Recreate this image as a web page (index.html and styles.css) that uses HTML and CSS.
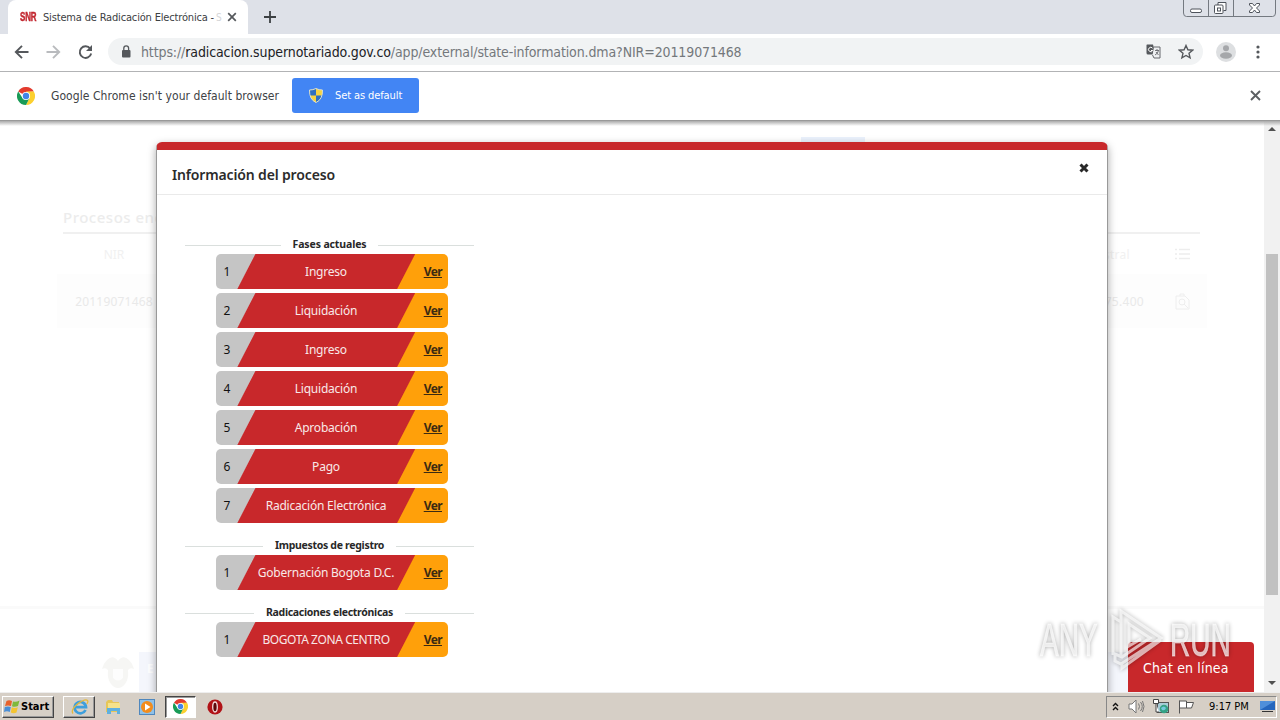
FILE: index.html
```
<!DOCTYPE html>
<html lang="es">
<head>
<meta charset="utf-8">
<title>Sistema de Radicación Electrónica</title>
<link rel="stylesheet" href="styles.css">
</head>
<body>
<svg class="defs" width="0" height="0">
  <symbol id="chrome" viewBox="0 0 18 18">
    <path d="M9 9L1.2 4.5A9 9 0 0 1 16.8 4.5L9 5z" fill="#e33b2e"/>
    <path d="M16.8 4.5A9 9 0 0 1 9 18L12.5 11 9 4.5z" fill="#fcd02f"/>
    <path d="M1.2 4.5A9 9 0 0 0 9 18L12.5 11 9 9 5.5 11z" fill="#199b57"/>
    <circle cx="9" cy="9" r="4.1" fill="#fff"/><circle cx="9" cy="9" r="3.2" fill="#4285e8"/>
  </symbol>
</svg>
<div class="screen">
  <header class="tabstrip">
    <div class="tab">
      <span class="favicon">SNR</span>
      <span class="tab-title">Sistema de Radicación Electrónica - <i>S</i></span>
      <svg class="tab-close" width="10" height="10" viewBox="0 0 10 10"><path d="M1.2 1.2l7.6 7.6M8.8 1.2L1.2 8.8" stroke="#55585c" stroke-width="1.7"/></svg>
    </div>
    <svg class="newtab" width="12" height="12" viewBox="0 0 12 12"><path d="M6 0v12M0 6h12" stroke="#3c4043" stroke-width="1.8"/></svg>
    <svg class="winctl" width="94" height="18" viewBox="0 0 94 18" fill="none" stroke="#747980">
      <path d="M.5 0v13q0 3.5 3 3.5h86q3 0 3-3.5V0M25.5 0v16M50.5 0v16"/>
      <g stroke="#4e535b"><rect x="7.500" y="9" width="11" height="3.500" rx="1.500" fill="#fff"/>
      <path d="M35 5V2.500h8v8h-2.500" fill="#fff"/><rect x="31.500" y="5" width="8.500" height="8.500" rx="1" fill="#fff"/><rect x="34.500" y="8" width="3" height="3"/>
      <path d="M66.500 3.500h3l2 2.500 2-2.500h3v1.500l-3 3 3 3v1.500h-3l-2-2.500-2 2.500h-3V11l3-3-3-3z" fill="#fff"/></g>
    </svg>
  </header>
  <nav class="toolbar">
    <svg class="nav-icons" width="80" height="16" viewBox="0 0 80 16" fill="none" stroke="#55585c" stroke-width="1.9">
      <path d="M14.500 8H2M8 1.800L1.800 8 8 14.200"/>
      <path d="M32.500 8H45M39 1.800L45.200 8 39 14.200" stroke="#b9bbbe"/>
      <path d="M76.200 4.600A5.800 5.800 0 1 0 77.200 9.500"/><path d="M78 1v6h-6z" fill="#55585c" stroke="none"/>
    </svg>
    <div class="omnibox">
      <svg width="10" height="13" viewBox="0 0 10 13"><rect x="1" y="5" width="8.500" height="7.500" rx="1" fill="#55585c"/><path d="M2.800 5V3.300a2.400 2.400 0 0 1 4.800 0V5" fill="none" stroke="#55585c" stroke-width="1.300"/></svg>
      <span class="url"><span class="scheme">https://</span><span class="host">radicacion.supernotariado.gov.co</span><span class="path">/app/external/state-information.dma?NIR=20119071468</span></span>
      <svg class="translate" width="15" height="15" viewBox="0 0 15 15"><path d="M1 .5h6l3 10H2q-1.500 0-1.500-1.500V1z" fill="#55585c"/><path d="M8 3h6v11H8L6.500 11" fill="#eef0f2" stroke="#66696d"/><path d="M6.500 4.200a2.200 2.200 0 1 0 .2 2.300H5" fill="none" stroke="#fff"/><path d="M9 6.500h4M11 5v1.500M12.500 6.500Q12 9.500 9 11M10 8l2.500 3" fill="none" stroke="#66696d" stroke-width=".9"/></svg>
      <svg class="star" width="16" height="16" viewBox="0 0 16 16"><path d="M8 1.500l1.900 4.300 4.700.4-3.600 3.100 1.100 4.600L8 11.500l-4.100 2.400L5 9.300 1.400 6.200l4.700-.4z" fill="none" stroke="#55585c" stroke-width="1.400"/></svg>
    </div>
    <svg class="avatar" width="20" height="20" viewBox="0 0 20 20"><circle cx="10" cy="10" r="10" fill="#dddfe1"/><circle cx="10" cy="6.300" r="3" fill="#a5a7aa"/><ellipse cx="10" cy="13.500" rx="6" ry="3.300" fill="#a5a7aa"/></svg>
    <svg class="kebab" width="4" height="14" viewBox="0 0 4 14" fill="#55585c"><circle cx="2" cy="2" r="1.600"/><circle cx="2" cy="7" r="1.600"/><circle cx="2" cy="12" r="1.600"/></svg>
  </nav>
  <div class="infobar">
    <svg width="18" height="18"><use href="#chrome"/></svg>
    <span class="info-text">Google Chrome isn't your default browser</span>
    <button class="default-btn">
      <svg width="14" height="15" viewBox="0 0 14 15"><path d="M7 .5Q10 2 13.500 2q.3 9.500-6.500 12.500Q.2 11.500.5 2 4 2 7 .5z" fill="#f6d341"/><path d="M7 .5V7.500H.9Q.4 5 .5 2 4 2 7 .5zM7 7.500h6.200Q12 12.500 7 14.500z" fill="#2f6fc0"/><path d="M7 .5Q10 2 13.500 2q.3 9.500-6.500 12.500Q.2 11.500.5 2 4 2 7 .5z" fill="none" stroke="#d9dfd0"/></svg>
      <span>Set as default</span>
    </button>
    <svg class="info-close" width="11" height="11" viewBox="0 0 11 11"><path d="M1 1l9 9M10 1l-9 9" stroke="#5c5f63" stroke-width="1.900"/></svg>
  </div>
  <main class="viewport">
    <div class="page">
      <div class="results">
        <h2>Procesos enc</h2>
        <div class="thead"><span class="c-nir">NIR</span><span class="c-val">gistral</span>
          <svg width="15" height="12" viewBox="0 0 15 12" stroke="#ededed" stroke-width="1.300"><path d="M4 1.500h11M4 6h11M4 10.500h11M0 1.500h2M0 6h2M0 10.500h2"/></svg></div>
        <div class="trow"><span class="c-nir">20119071468</span><span class="c-val">75.400</span>
          <svg width="15" height="17" viewBox="0 0 15 17" fill="none" stroke="#eee"><path d="M1 3h9l4 4v9H1zM5 3V1h4v2"/><circle cx="7" cy="9" r="3"/><path d="M9 11l4 4"/></svg></div>
      </div>
      <footer class="site-footer">
        <svg width="42" height="40" viewBox="0 0 42 40" fill="#f6f6f4"><path d="M10 8q6-6 11 1 5-7 11-1 4 4 5 9-4-2-6 1 1 9-3 14-3 4-7 4t-7-4q-4-5-3-14-2-3-6-1 1-5 5-9z"/><path d="M16 17h10v9q-5 5-10 0z" fill="#fdfdfd"/></svg>
        <div class="flagbox">E</div>
      </footer>
    </div>
    <div class="scrollbar">
      <svg width="16" height="17" viewBox="0 0 16 17"><path d="M4 10l4-4 4 4z" fill="#505050"/></svg>
      <div class="thumb"></div>
      <svg width="16" height="17" viewBox="0 0 16 17"><path d="M4 6h8l-4 4z" fill="#505050"/></svg>
    </div>
    <div class="edge-shadow"></div>
    <div class="search-tab"></div>
    <section class="modal">
      <div class="modal-head"><h1>Información del proceso</h1>
        <svg width="10" height="10" viewBox="0 0 10 10"><path d="M1.500 1.500l7 7M8.500 1.500l-7 7" stroke="#282828" stroke-width="3"/></svg></div>
      <div class="modal-body">
        <div class="legend"><span>Fases actuales</span></div>
        <div class="rows">
          <div class="phase"><b>1</b><span>Ingreso</span><a>Ver</a></div>
          <div class="phase"><b>2</b><span>Liquidación</span><a>Ver</a></div>
          <div class="phase"><b>3</b><span>Ingreso</span><a>Ver</a></div>
          <div class="phase"><b>4</b><span>Liquidación</span><a>Ver</a></div>
          <div class="phase"><b>5</b><span>Aprobación</span><a>Ver</a></div>
          <div class="phase"><b>6</b><span>Pago</span><a>Ver</a></div>
          <div class="phase"><b>7</b><span>Radicación Electrónica</span><a>Ver</a></div>
        </div>
        <div class="legend tight"><span>Impuestos de registro</span></div>
        <div class="rows"><div class="phase"><b>1</b><span>Gobernación Bogota D.C.</span><a>Ver</a></div></div>
        <div class="legend tight"><span>Radicaciones electrónicas</span></div>
        <div class="rows"><div class="phase"><b>1</b><span class="caps">BOGOTA ZONA CENTRO</span><a>Ver</a></div></div>
      </div>
    </section>
    <div class="chat">Chat en línea</div>
    <div class="watermark"><span>ANY</span>
      <svg width="58" height="64" viewBox="0 0 58 64" fill="none" stroke="#fff" stroke-opacity=".65" stroke-width="3"><path d="M6 47V9l8 5v34M14 14V3l40 27-40 26-6-3V46l7 3 28-19-21-14v22l12-7M15 56v4l39-28"/></svg>
      <span>RUN</span></div>
  </main>
  <footer class="taskbar">
    <div class="task start">
      <svg width="16" height="15" viewBox="0 0 16 15"><path d="M2.500 2Q5 .5 8 2L7 7Q4 5.800 1 7z" fill="#e8622c"/><path d="M9 2.400Q12 3.500 15.500 1.500L14 7q-3 1.500-6 .3z" fill="#7fb93c"/><path d="M.8 8Q4 6.800 6.800 8l-1 5Q3 11.500 0 13z" fill="#4a8ed6"/><path d="M7.800 8.300q3 1.200 6 0L12.500 13.500q-3 1.500-5.700 0z" fill="#f4c431"/></svg>
      <span>Start</span></div>
    <div class="task ie">
      <svg width="18" height="18" viewBox="0 0 18 18" fill="none"><path d="M14.500 12A5.700 5.700 0 1 1 15 9.200H5" stroke="#3e9fdc" stroke-width="2.700"/><path d="M2 15.500Q-.5 12 6 6.500 14 .5 16.500 2.500q1 1-.7 3.500" stroke="#e5b93c" stroke-width="1.300"/></svg></div>
    <svg class="folder" width="16" height="16" viewBox="0 0 16 16"><path d="M1 3l2-2h4l1 2h6v10H1z" fill="#e6c658"/><path d="M3 4h12v7H3z" fill="#f5e28a"/><path d="M2 9h13v6h-3v-3H6v3H2z" fill="#5fb0df"/></svg>
    <svg class="media" width="16" height="16" viewBox="0 0 16 16"><rect x=".5" y=".5" width="15" height="15" fill="#8fc1e8" stroke="#4f87bd"/><circle cx="8" cy="8" r="6" fill="#f28c1c"/><path d="M6 4.500v7L11.500 8z" fill="#fff"/></svg>
    <div class="task chrome-task"><svg width="15" height="15"><use href="#chrome"/></svg></div>
    <svg class="opera" width="16" height="16" viewBox="0 0 16 16"><circle cx="8" cy="8" r="7.600" fill="#b11217"/><ellipse cx="8" cy="8" rx="2.300" ry="5" fill="#5d070a" stroke="#f2dcdc" stroke-width="1.300"/></svg>
    <div class="tray">
      <svg class="chev" width="7" height="9" viewBox="0 0 7 9" fill="none" stroke="#111" stroke-width="1.400"><path d="M1 4l2.500-2.500L6 4M1 8l2.500-2.500L6 8"/></svg>
      <svg class="vol" width="17" height="15" viewBox="0 0 17 15" fill="none" stroke="#777"><path d="M1 5h3l4-4v13l-4-4H1z" fill="#fff"/><path d="M10.500 4.500q2 3 0 6M12.500 3q3.500 4.500 0 9M14.500 2q3 5.500 0 11"/></svg>
      <svg class="net" width="17" height="15" viewBox="0 0 17 15"><rect x="4.500" y="3.500" width="11" height="10" fill="#a9cdd8" stroke="#555"/><path d="M.5 .5h5v4h-5zM3 4.500V13h3" fill="#fff" stroke="#444"/><circle cx="11" cy="10" r="4.300" fill="#35a184"/><path d="M8 9q3-3 5 0-1 3-4 2z" fill="#75c8dd"/></svg>
      <svg class="flag" width="17" height="15" viewBox="0 0 17 15" fill="#fff" stroke="#555"><path d="M1.500 14.500V1.500M1.500 2h7v7h-7zM8.500 3.500h7l-2 5.500h-5"/></svg>
      <span class="clock">9:17 PM</span>
      <svg class="desk" width="15" height="13" viewBox="0 0 15 13"><path d="M0 1h15v9H0z" fill="#2566bd"/><path d="M0 1h15L5 7 0 10z" fill="#4f8fda"/><path d="M2 11.500h11" stroke="#333"/></svg>
    </div>
  </footer>
</div>
</body>
</html>
```
FILE: styles.css
```
* { box-sizing: border-box; }
body { margin: 0; font-family: "DejaVu Sans Condensed", "DejaVu Sans", sans-serif; }
svg { display: block; flex: none; }
.defs { position: absolute; }
.screen { width: 1280px; height: 720px; overflow: hidden; display: flex; flex-direction: column; background: #fff; white-space: nowrap; }

.tabstrip { height: 34px; background: #dee1e8; display: flex; align-items: center; }
.tab { width: 240px; height: 34px; margin-left: 8px; background: #fff; border-radius: 8px 8px 0 0; display: flex; align-items: center; padding-left: 12px; }
.favicon { width: 23px; font: bold 12px "Liberation Sans", sans-serif; letter-spacing: -.2px; color: #c22730; transform: scaleX(.66); transform-origin: 0 50%; -webkit-text-stroke: .5px #c22730; }
.tab-title { width: 176px; font-size: 11px; letter-spacing: -.17px; color: #3c4043; }
.tab-title i { font-style: normal; font-size: 10px; color: #d5d6d8; margin-left: -1px; }
.tab-close { margin-left: 8px; }
.newtab { margin-left: 16px; }
.winctl { margin: 0 3px 0 auto; align-self: flex-start; }

.toolbar { height: 38px; border-bottom: 1px solid #b2b3b5; display: flex; align-items: center; padding: 0 20px 2px 14px; }
.omnibox { margin-left: 14px; width: 1095px; height: 27px; border-radius: 14px; background: #f1f3f4; display: flex; align-items: center; padding: 0 9px 0 13px; }
.url { margin-left: 10px; font-size: 14px; letter-spacing: -.115px; }
.scheme, .path { color: #74787c; }
.host { color: #202124; }
.translate { margin-left: auto; }
.star { margin-left: 17px; }
.avatar { margin-left: 13px; }
.kebab { margin-left: auto; }

.infobar { height: 48px; display: flex; align-items: center; padding: 0 19px 1px 17px; }
.info-text { width: 229px; margin-left: 16px; font-size: 12px; letter-spacing: .06px; color: #404245; }
.default-btn { margin: 0 0 0 12px; width: 127px; height: 35px; border: 0; border-radius: 3px; background: #4285f4; color: #fff; display: flex; align-items: center; padding: 0 0 0 17px; gap: 12px; font: 11px "DejaVu Sans Condensed", sans-serif; letter-spacing: -.1px; }
.info-close { margin-left: auto; }

.viewport { position: relative; height: 572px; display: flex; overflow: hidden; border-top: 1px solid #999; }
.edge-shadow { position: absolute; left: 0; top: 0; width: 100%; height: 5px; background: linear-gradient(#aaa, rgba(200,200,200,0)); }
.page { flex: 1; padding-top: 82px; display: flex; flex-direction: column; color: #f1f1f1; font-family: "Noto Sans", sans-serif; }
.results { margin: 0 57px 0 57px; }
.results h2 { margin: 0 7px 0 6px; height: 31px; line-height: 28px; font-size: 15px; font-weight: 500; letter-spacing: .5px; width: 1137px; color: #ececec; border-bottom: 2px solid #f0f0f0; }
.thead, .trow { display: flex; align-items: center; font-size: 12px; }
.thead { height: 40px; }
.trow { height: 54px; background: #fdfdfd; color: #e9e9e9; }
.c-nir { width: 102px; margin-left: 6px; text-align: center; }
.trow .c-nir { letter-spacing: .2px; }
.c-val { margin-left: auto; width: 100px; text-align: right; letter-spacing: .3px; }
.thead .c-val { padding-right: 14px; }
.thead svg, .trow svg { margin: 0 17px 0 31px; }
.site-footer { margin-top: auto; height: 86px; border-top: 3px solid #fafafa; display: flex; padding: 43px 0 0 97px; }
.flagbox { width: 1100px; height: 44px; background: #f4f6fc; font-size: 12px; font-weight: bold; color: #fff; padding: 8px; }
.scrollbar { width: 16px; background: #f1f1f1; display: flex; flex-direction: column; }
.thumb { width: 12px; height: 341px; margin: 116px 2px auto; background: #c1c1c1; }
.search-tab { position: absolute; left: 801px; top: 16px; width: 64px; height: 10px; background: #eaf1fc; }

.modal { position: absolute; left: 156px; top: 21px; width: 952px; height: 600px; background: #fff; border: 1px solid #999; border-top: 8px solid #c8282b; border-radius: 6px 6px 0 0; box-shadow: 0 3px 9px rgba(0,0,0,.35); font-family: "Noto Sans", sans-serif; }
.modal-head { height: 45px; border-bottom: 1px solid #eaeaea; display: flex; justify-content: space-between; padding: 0 18px 0 15px; }
.modal-head h1 { margin: 0; font-size: 14px; font-weight: 600; line-height: 49px; letter-spacing: -.15px; color: #2b2b2b; }
.modal-head svg { margin-top: 13px; }
.modal-body { padding: 41px 0 0 28px; width: 317px; }
.legend { height: 18px; display: flex; align-items: center; gap: 12px; font-size: 10.5px; font-weight: bold; color: #282828; letter-spacing: -.12px; }
.legend span { margin-top: -2px; }
.legend.tight { letter-spacing: -.3px; }
.legend::before, .legend::after { content: ""; flex: 1; height: 1px; background: #dadfdd; }
.rows { padding: 0 26px 0 31px; margin-bottom: 14px; display: grid; gap: 4px; }
.phase { height: 35px; border-radius: 5px; display: flex; align-items: center; font-size: 12px; color: #f8e8e8; background: linear-gradient(117.3deg, #c5c5c5 0, #c5c5c5 34.500px, #c8282b 35.500px, #c8282b 176.500px, #ffa00a 177.500px); }
.phase b { width: 22px; text-align: center; font-weight: normal; color: #111; }
.phase span { width: 176px; text-align: center; letter-spacing: -.22px; }
.phase .caps { letter-spacing: -.4px; }
.phase a { margin-left: auto; margin-right: 6px; color: #3b2a12; font-weight: bold; text-decoration: underline; letter-spacing: -.6px; }

.chat { position: absolute; left: 1128px; top: 521px; width: 126px; height: 52px; border-radius: 4px 4px 0 0; background: #c8282b; color: #fff; font-size: 14px; letter-spacing: .15px; line-height: 52px; padding-left: 15px; }
.watermark { position: absolute; left: 1040px; top: 485px; height: 68px; display: flex; align-items: center; font: 46px "Liberation Sans", sans-serif; color: rgba(255,255,255,.7); -webkit-text-stroke: 1px rgba(255,255,255,.5); filter: drop-shadow(0 0 2px rgba(0,0,0,.45)); pointer-events: none; }
.watermark span { display: block; width: 61px; transform: scaleX(.61); transform-origin: 0 50%; }
.watermark svg { margin: 0 5px 0 6px; }

.taskbar { height: 28px; background: #d6cfc6; border-top: 1px solid #eee; display: flex; align-items: center; }
.task { height: 22px; border: 1px solid; border-color: #fff #444 #444 #fff; box-shadow: inset -1px -1px #999; display: flex; align-items: center; }
.start { width: 52px; margin-left: 2px; padding-left: 1px; gap: 1px; font-size: 11px; font-weight: bold; }
.ie { width: 32px; margin-left: 9px; padding-left: 7px; }
.folder { margin-left: 10px; }
.media { margin-left: 18px; }
.chrome-task { width: 31px; margin-left: 10px; padding-left: 7px; background: #fff; border-color: #444 #fff #fff #444; box-shadow: inset 1px 1px #999; }
.opera { margin-left: 11px; }
.tray { margin: 0 3px 0 auto; width: 171px; height: 22px; border: 1px solid; border-color: #888 #fff #fff #888; display: flex; align-items: center; padding-left: 5px; }
.vol { margin-left: 9px; }
.net { margin-left: 8px; }
.flag { margin-left: 8px; }
.clock { width: 40px; margin-left: 14px; font-size: 11px; }
.desk { margin-left: auto; margin-right: 1px; }
```
